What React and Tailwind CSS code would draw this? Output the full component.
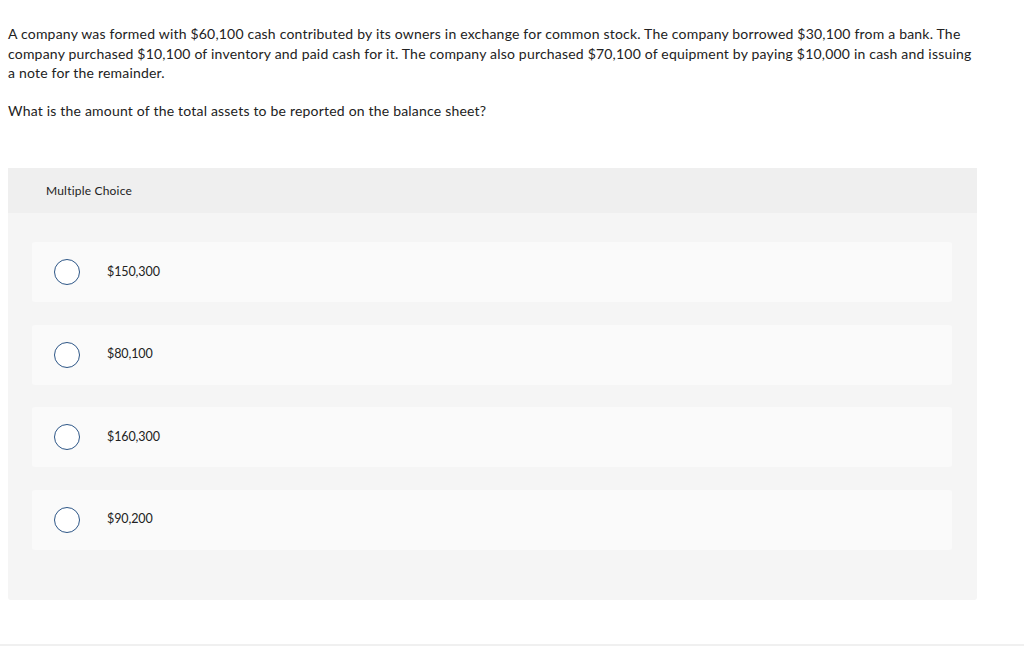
import React from "react";

const options = ["$150,300", "$80,100", "$160,300", "$90,200"];

export default function App() {
  return (
    <div className="w-[1024px] h-[648px] bg-white relative text-[#222]" style={{ fontFamily: "Lato, 'Open Sans', sans-serif" }}>
      <div className="px-2 pt-[24px]">
        <p className="text-[14px] leading-[19.5px] tracking-[0.2px] w-[966px]">
          A company was formed with $60,100 cash contributed by its owners in exchange for common stock. The company borrowed $30,100 from a bank. The company purchased $10,100 of inventory and paid cash for it. The company also purchased $70,100 of equipment by paying $10,000 in cash and issuing a note for the remainder.
        </p>
        <p className="text-[14px] leading-[19.5px] tracking-[0.2px] mt-[18px]">
          What is the amount of the total assets to be reported on the balance sheet?
        </p>
      </div>
      <div className="mt-[48px] ml-2 w-[969px] bg-[#f5f5f5] rounded-b-[3px] pb-[50px]">
        <div className="h-[45px] bg-[#efefef] flex items-center pl-[38px] text-[12px] tracking-[0.2px] text-[#222]">
          Multiple Choice
        </div>
        <div className="pt-[29px] px-6 flex flex-col gap-[22.5px]">
          {options.map((o) => (
            <div key={o} className="h-[60px] w-[920px] bg-[#fafafa] rounded-[3px] flex items-center">
              <div className="ml-[22px] w-[26px] h-[26px] rounded-full border border-[#2d5687] bg-white" />
              <span className="ml-[27px] text-[12.5px] tracking-[-0.1px]">{o}</span>
            </div>
          ))}
        </div>
      </div>
      <div className="absolute left-0 right-0 top-[644px] h-[2px] bg-[#f0f0f0]" />
    </div>
  );
}
